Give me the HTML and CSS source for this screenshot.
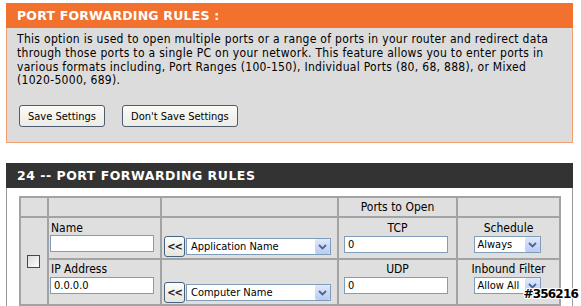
FILE: index.html
```html
<!DOCTYPE html>
<html>
<head>
<meta charset="utf-8">
<link rel="stylesheet" href="styles.css">
</head>
<body>
<div class="page">
  <div class="panel">
    <div class="panel-title">PORT FORWARDING RULES :</div>
    <div class="panel-content">
      <div class="desc">This option is used to open multiple ports or a range of ports in your router and redirect data through those ports to a single PC on your network. This feature allows you to enter ports in various formats including, Port Ranges (100-150), Individual Ports (80, 68, 888), or Mixed (1020-5000, 689).</div>
      <div class="btns">
        <span class="btn">Save Settings</span>
        <span class="btn">Don't Save Settings</span>
      </div>
    </div>
  </div>

  <div class="rules">
    <div class="rules-head">24 -- PORT FORWARDING RULES</div>
    <div class="rules-body">
      <table class="grid">
        <colgroup>
          <col class="c1"><col class="c2"><col class="c3"><col class="c4"><col class="c5">
        </colgroup>
        <tr class="r0">
          <td></td><td></td><td></td><td class="center">Ports to Open</td><td></td>
        </tr>
        <tr class="r1">
          <td rowspan="2" class="chk-cell"><span class="chk"></span></td>
          <td class="lab">Name<br><input class="txt" type="text" value=""></td>
          <td class="pick"><span class="pickbtn">&lt;&lt;</span><span class="sel wide">Application Name<span class="arr"><svg width="9" height="6" viewBox="0 0 9 6"><path d="M1 1 L4.5 4.5 L8 1" fill="none" stroke="#4a6694" stroke-width="1.8"/></svg></span></span></td>
          <td class="lab center">TCP<br><input class="txt port" type="text" value="0"></td>
          <td class="lab center">Schedule<br><span class="sel small">Always<span class="arr"><svg width="9" height="6" viewBox="0 0 9 6"><path d="M1 1 L4.5 4.5 L8 1" fill="none" stroke="#4a6694" stroke-width="1.8"/></svg></span></span></td>
        </tr>
        <tr class="r2">
          <td class="lab">IP Address<br><input class="txt" type="text" value="0.0.0.0"></td>
          <td class="pick"><span class="pickbtn">&lt;&lt;</span><span class="sel wide">Computer Name<span class="arr"><svg width="9" height="6" viewBox="0 0 9 6"><path d="M1 1 L4.5 4.5 L8 1" fill="none" stroke="#4a6694" stroke-width="1.8"/></svg></span></span></td>
          <td class="lab center">UDP<br><input class="txt port" type="text" value="0"></td>
          <td class="lab center">Inbound Filter<br><span class="sel small">Allow All<span class="arr"><svg width="9" height="6" viewBox="0 0 9 6"><path d="M1 1 L4.5 4.5 L8 1" fill="none" stroke="#4a6694" stroke-width="1.8"/></svg></span></span></td>
        </tr>
        <tr class="r3">
          <td></td><td></td><td></td><td></td><td></td>
        </tr>
      </table>
    </div>
  </div>
  <div class="mark">#356216</div>
</div>
</body>
</html>
```

FILE: styles.css
```css
html, body {
  margin: 0;
  padding: 0;
  background: #fff;
  overflow: hidden;
}
body {
  font-family: "DejaVu Sans Condensed", "DejaVu Sans", sans-serif;
  font-size: 11px;
  color: #000;
}
.page {
  position: relative;
  width: 581px;
  height: 306px;
  padding: 3px 0 0 6px;
  box-sizing: border-box;
}
.panel {
  width: 567px;
}
.panel-title {
  height: 25px;
  background: #f2712f;
  color: #fff;
  font-family: "DejaVu Sans", sans-serif;
  font-weight: bold;
  font-size: 12.5px;
  letter-spacing: 0.2px;
  line-height: 25px;
  padding-left: 11px;
}
.panel-content {
  background: #dcdcdc;
  border: 1px solid #f2a070;
  border-top: none;
  height: 115px;
  padding: 5px 9px 0 10px;
  box-sizing: border-box;
}
.desc {
  font-size: 12px;
  line-height: 13.8px;
  letter-spacing: 0.3px;
  background: #dcdcdc;
}
.btns {
  display: flex;
  gap: 17px;
  margin-top: 17px;
  padding-left: 2px;
}
.btn {
  display: inline-flex;
  align-items: center;
  box-sizing: border-box;
  font-size: 11px;
  height: 22px;
  padding: 0 8px;
  border: 1px solid #4f5d70;
  border-radius: 3px;
  background: linear-gradient(#fbfbf8, #ecebe4);
  color: #000;
}
.rules {
  margin-top: 20px;
  width: 567px;
}
.rules-head {
  height: 25px;
  background: #333;
  color: #fff;
  font-family: "DejaVu Sans", sans-serif;
  font-weight: bold;
  font-size: 12.5px;
  letter-spacing: 0.5px;
  line-height: 26px;
  padding-left: 11px;
}
.rules-body {
  border-left: 1px solid #999;
  border-right: 1px solid #999;
  padding: 8px 0 0 12px;
  height: 120px;
}
.grid {
  border-collapse: collapse;
  width: 540px;
  table-layout: fixed;
}
.c1 { width: 28px; }
.c2 { width: 113px; }
.c3 { width: 177px; }
.c4 { width: 119px; }
.c5 { width: 103px; }
.grid td {
  background: #dfdfdf;
  border: 2px solid #a3a3a3;
  padding: 0 2px;
  font-size: 12px;
  line-height: 11px;
}
.r0 td { height: 18px; vertical-align: middle; }
.r1 td { height: 35px; }
.r2 td { height: 40px; }
.r3 td { height: 10px; }
.center { text-align: center; }
.lab {
  vertical-align: top;
  padding-top: 5px !important;
}
.r2 .lab { padding-top: 4px !important; }
.txt {
  display: block;
  box-sizing: border-box;
  width: 104px;
  height: 17px;
  margin: 1px 0 0 -1px;
  border: 1px solid #7f9db9;
  padding: 0 3px;
  font-family: "DejaVu Sans Condensed", "DejaVu Sans", sans-serif;
  font-size: 11px;
  background: #fff;
  outline: none;
}
.r2 .txt { margin-top: 2px; }
.txt.port { margin: 2px auto 0 3px; }
.pick {
  vertical-align: bottom;
  padding-bottom: 1px !important;
  white-space: nowrap;
}
.pick > * { vertical-align: middle; }
.pickbtn {
  display: inline-block;
  box-sizing: border-box;
  width: 21px;
  height: 21px;
  border: 1px solid #46627f;
  border-radius: 3px;
  background: linear-gradient(#fcfcfa, #e6e5de);
  font-size: 11px;
  font-weight: bold;
  line-height: 19px;
  text-align: center;
  letter-spacing: -1px;
  color: #222;
}
.sel {
  display: inline-flex;
  align-items: center;
  justify-content: space-between;
  box-sizing: border-box;
  height: 17px;
  border: 1px solid #7f9db9;
  background: #fff;
  padding-left: 4px;
  font-size: 11px;
  text-align: left;
}
.sel.wide { width: 145px; margin-left: 1px; }
.sel.small { width: 67px; margin-top: 2px; margin-left: -3px; padding-left: 3px; }
.arr {
  display: flex;
  align-items: center;
  justify-content: center;
  width: 15px;
  height: 15px;
  border-radius: 2px;
  background: linear-gradient(#dfe8fc, #b9cbf3);
}
.chk-cell {
  vertical-align: middle;
  text-align: center;
}
.chk {
  display: inline-block;
  width: 13px;
  height: 13px;
  box-sizing: border-box;
  border: 1px solid #1c5180;
  background: linear-gradient(135deg, #dcdcd7, #fff);
  margin: 2px 2px 0 0;
}
.mark {
  position: absolute;
  right: 3px;
  top: 287px;
  font-family: "DejaVu Sans", sans-serif;
  font-weight: bold;
  font-size: 12px;
  letter-spacing: -0.8px;
  color: #000;
  text-shadow: 1px 0 #fff, -1px 0 #fff, 0 1px #fff, 0 -1px #fff, 1px 1px #fff, -1px -1px #fff, 1px -1px #fff, -1px 1px #fff;
}
```
